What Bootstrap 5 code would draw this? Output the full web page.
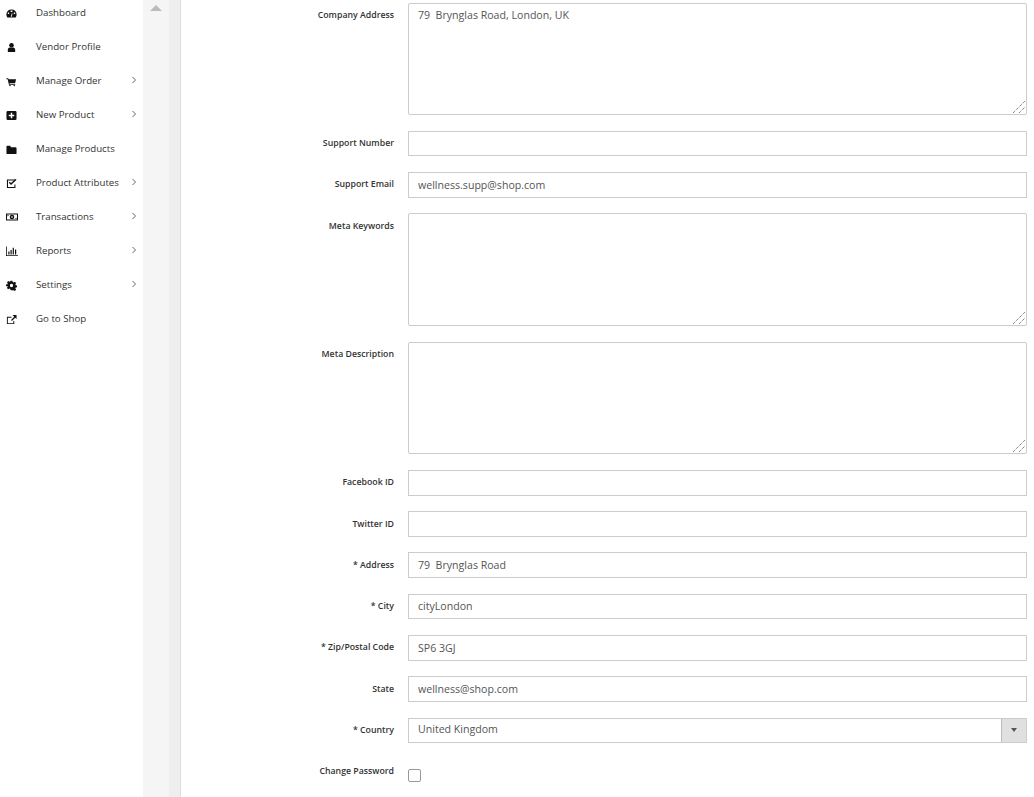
<!DOCTYPE html>
<html lang="en">
<head>
<meta charset="utf-8">
<title>Vendor Profile</title>
<link href="https://cdn.jsdelivr.net/npm/bootstrap@5.3.0/dist/css/bootstrap.min.css" rel="stylesheet">
<style>
html,body{height:100%;}
body{font-family:"Open Sans",sans-serif;background:#fff;overflow:hidden;color:#333;}
.shell{height:797px;overflow:hidden;}
.side{width:143px;flex:none;background:#fff;}
.side-link{height:34px;color:#333;font-size:9.7px;text-decoration:none;position:relative;top:-4px;}
.side-ico{width:36px;flex:none;padding-left:6px;display:flex;}
.side-ico svg{width:11px;height:11px;fill:#111;}
.side-ico svg.wide{width:12px;height:12px;}
.side-chev{width:8px;height:8px;fill:none;stroke:#666;stroke-width:1;margin-left:auto;margin-right:5px;margin-top:-2px;}
.rail{width:26px;flex:none;background:#f5f5f5;}
.rail-up{width:0;height:0;border-left:6px solid transparent;border-right:6px solid transparent;border-bottom:6px solid #bbb;margin:5px auto 0;}
.rail2{width:12px;flex:none;background:#eee;border-right:1px solid #ddd;}
.main-area{padding-top:2.5px;padding-right:7px;min-width:0;}
.frow{margin-bottom:15.6px;}
.frow-first{margin-bottom:15.5px;}
.flabel{width:213px;flex:none;margin-right:14px;margin-bottom:0;text-align:right;font-size:8.75px;font-weight:600;color:#333;padding-top:5.5px;line-height:14px;}
.fbox{border:1px solid #ccc;border-radius:0;height:25.7px;font-size:10.6px;color:#555;padding:0 9px .5px;box-shadow:none;}
.fbox.form-control{min-height:0;}
.areawrap{flex:1 1 auto;min-width:0;}
textarea.fbox{height:112.7px;padding-top:4px;line-height:14px;border-radius:2px;resize:none;display:block;}
.gripmark{position:absolute;right:1px;bottom:1px;width:14px;height:14px;fill:none;stroke:#555;stroke-width:1;stroke-dasharray:1 1;pointer-events:none;}
.pick{border:1px solid #ccc;height:25.7px;font-size:10.6px;color:#555;}
.pick-val{padding-left:9px;}
.pick-btn{width:25px;background:#e0e0e0;border-left:1px solid #bbb;}
.pick-caret{width:0;height:0;border-left:3.500px solid transparent;border-right:3.500px solid transparent;border-top:4px solid #555;}
.fcheck{width:12.500px;height:13px;margin:10px 0 0;border:1px solid #999;border-radius:2px;appearance:none;background:#fff;display:block;}
</style>
</head>
<body>
<div class="d-flex shell">
  <nav class="side d-flex flex-column">
    <a class="side-link d-flex align-items-center" href="#"><span class="side-ico"><svg viewBox="0 0 12 12"><path fill-rule="evenodd" d="M6 1.500A5.600 5.600 0 0 0 .4 7c0 1.200.4 2.300 1 3.300h9.200c.6-1 1-2.100 1-3.300A5.600 5.600 0 0 0 6 1.500zM5 2.800h2v1.500H5zM2 5h1.500v1.500H2zm6.500 0H10v1.500H8.500zM5.300 9.500l1-3.700.8.2-.8 3.500z"/></svg></span>Dashboard</a>
    <a class="side-link d-flex align-items-center" href="#"><span class="side-ico"><svg viewBox="0 0 12 12"><circle cx="6" cy="3.500" r="2.500"/><path d="M2 11V8.500C2 7 3 6 4 6h4c1 0 2 1 2 2.500V11z"/></svg></span>Vendor Profile</a>
    <a class="side-link d-flex align-items-center" href="#"><span class="side-ico"><svg viewBox="0 0 12 12"><path d="M.5 2.500h2l.3 1H11l-1 4H3.800l.2 1h6v1H3.200L1.800 3.500H.5z"/><circle cx="4.300" cy="10.300" r=".8"/><circle cx="9" cy="10.300" r=".8"/></svg></span>Manage Order<svg class="side-chev" viewBox="0 0 8 8"><path d="M2.500 1 5.500 4 2.500 7"/></svg></a>
    <a class="side-link d-flex align-items-center" href="#"><span class="side-ico"><svg viewBox="0 0 12 12"><path fill-rule="evenodd" d="M2 1h8a1.500 1.500 0 0 1 1.500 1.500v7A1.500 1.500 0 0 1 10 11H2A1.500 1.500 0 0 1 .5 9.500v-7A1.500 1.500 0 0 1 2 1zm3.200 2v2.200H3v1.600h2.200V9h1.600V6.800H9V5.200H6.800V3z"/></svg></span>New Product<svg class="side-chev" viewBox="0 0 8 8"><path d="M2.500 1 5.500 4 2.500 7"/></svg></a>
    <a class="side-link d-flex align-items-center" href="#"><span class="side-ico"><svg viewBox="0 0 12 12"><path d="M.5 3a1 1 0 0 1 1-1h3l1 1.500h5a1 1 0 0 1 1 1V10a1 1 0 0 1-1 1h-9a1 1 0 0 1-1-1z"/></svg></span>Manage Products</a>
    <a class="side-link d-flex align-items-center" href="#"><span class="side-ico"><svg viewBox="0 0 12 12"><path fill-rule="evenodd" d="M1 1.500h9v1.200H2.200v7h7V7h1.100v4H1z"/><path d="M3 5.200l2.500 2.500L11.500 2 10.300 1 5.500 5.500 4 4z"/></svg></span>Product Attributes<svg class="side-chev" viewBox="0 0 8 8"><path d="M2.500 1 5.500 4 2.500 7"/></svg></a>
    <a class="side-link d-flex align-items-center" href="#"><span class="side-ico"><svg class="wide" viewBox="0 0 12 12"><path fill-rule="evenodd" d="M0 2.500h12v7H0zm1 1v5h10v-5z"/><path fill-rule="evenodd" d="M6 3.700a2.300 2.300 0 1 0 0 4.600 2.300 2.300 0 0 0 0-4.600zM5.500 5h1v2h-1z"/><path d="M1.500 4h1.500L1.500 5.500zM10.500 8H9l1.500-1.500z"/></svg></span>Transactions<svg class="side-chev" viewBox="0 0 8 8"><path d="M2.500 1 5.500 4 2.500 7"/></svg></a>
    <a class="side-link d-flex align-items-center" href="#"><span class="side-ico"><svg class="wide" viewBox="0 0 12 12"><path d="M0 1.500h.8V10.200H12v.8H0z"/><path d="M2.300 6.500h1.200v3H2.300zM4.500 5h1.200v4.500H4.500zM6.700 2.800h1.200v6.700H6.700zM9 4.500h1.200v5H9z"/></svg></span>Reports<svg class="side-chev" viewBox="0 0 8 8"><path d="M2.500 1 5.500 4 2.500 7"/></svg></a>
    <a class="side-link d-flex align-items-center" href="#"><span class="side-ico"><svg viewBox="0 0 12 12"><path fill-rule="evenodd" d="M5 .8h2l.3 1.500 1 .4 1.300-.8 1.400 1.400-.8 1.300.4 1 1.500.3v2l-1.500.3-.4 1 .8 1.300-1.400 1.400-1.300-.8-1 .4L7 11.200H5l-.3-1.500-1-.4-1.300.8L1 8.700l.8-1.300-.4-1L0 7V5l1.500-.3.4-1-.8-1.300 1.400-1.400 1.300.8 1-.4zM6 4.200a1.800 1.800 0 1 0 0 3.600 1.800 1.800 0 0 0 0-3.600z"/></svg></span>Settings<svg class="side-chev" viewBox="0 0 8 8"><path d="M2.500 1 5.500 4 2.500 7"/></svg></a>
    <a class="side-link d-flex align-items-center" href="#"><span class="side-ico"><svg viewBox="0 0 12 12"><path fill-rule="evenodd" d="M1 3h5v1H2v6h6V7.500h1V11H1z"/><path d="M7 1h4.500v4.500L10 4 6.500 7.500l-1-1L9 3z"/></svg></span>Go to Shop</a>
  </nav>
  <div class="rail"><div class="rail-up"></div></div>
  <div class="rail2"></div>
  <main class="main-area flex-fill">
    <form>
      <div class="d-flex frow-first"><label class="flabel">Company Address</label><div class="areawrap position-relative"><textarea class="form-control fbox">79  Brynglas Road, London, UK</textarea><svg class="gripmark" viewBox="0 0 14 14"><path d="M1 13 13 1M7 13l6-6"/></svg></div></div>
      <div class="d-flex frow"><label class="flabel">Support Number</label><input class="form-control fbox" value=""></div>
      <div class="d-flex frow"><label class="flabel">Support Email</label><input class="form-control fbox" value="wellness.supp@shop.com"></div>
      <div class="d-flex frow"><label class="flabel">Meta Keywords</label><div class="areawrap position-relative"><textarea class="form-control fbox"></textarea><svg class="gripmark" viewBox="0 0 14 14"><path d="M1 13 13 1M7 13l6-6"/></svg></div></div>
      <div class="d-flex frow"><label class="flabel">Meta Description</label><div class="areawrap position-relative"><textarea class="form-control fbox"></textarea><svg class="gripmark" viewBox="0 0 14 14"><path d="M1 13 13 1M7 13l6-6"/></svg></div></div>
      <div class="d-flex frow"><label class="flabel">Facebook ID</label><input class="form-control fbox" value=""></div>
      <div class="d-flex frow"><label class="flabel">Twitter ID</label><input class="form-control fbox" value=""></div>
      <div class="d-flex frow"><label class="flabel">* Address</label><input class="form-control fbox" value="79  Brynglas Road"></div>
      <div class="d-flex frow"><label class="flabel">* City</label><input class="form-control fbox" value="cityLondon"></div>
      <div class="d-flex frow"><label class="flabel">* Zip/Postal Code</label><input class="form-control fbox" value="SP6 3GJ"></div>
      <div class="d-flex frow"><label class="flabel">State</label><input class="form-control fbox" value="wellness@shop.com"></div>
      <div class="d-flex frow"><label class="flabel">* Country</label><div class="pick d-flex flex-fill align-items-stretch"><span class="pick-val flex-fill d-flex align-items-center">United Kingdom</span><span class="pick-btn d-flex align-items-center justify-content-center"><span class="pick-caret"></span></span></div></div>
      <div class="d-flex frow"><label class="flabel">Change Password</label><input type="checkbox" class="fcheck"></div>
    </form>
  </main>
</div>
</body>
</html>
